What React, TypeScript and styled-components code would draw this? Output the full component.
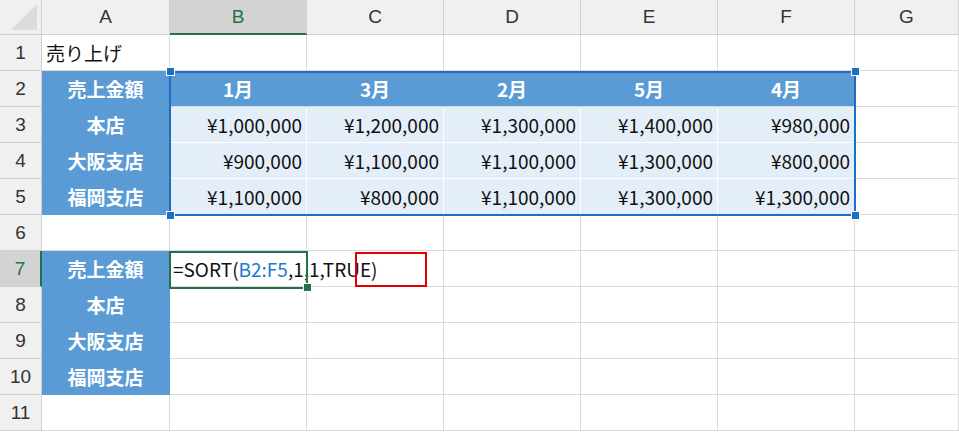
import React from "react";
import styled, { createGlobalStyle } from "styled-components";

const Global = createGlobalStyle`
  body { margin: 0; background: #fff; font-family: "Noto Sans CJK JP", "Noto Sans", sans-serif; }
`;

const COLS = [42, 128, 137, 137, 137, 137, 137, 104];
const ROWH = 36;

const Wrap = styled.div`
  position: relative;
  width: 959px;
  height: 432px;
  overflow: hidden;
`;

const Grid = styled.div`
  display: grid;
  grid-template-columns: ${COLS.map((c) => c + "px").join(" ")};
  grid-template-rows: 35px repeat(11, ${ROWH}px);
`;

const ColHead = styled.div<{ $active?: boolean }>`
  background: ${(p) => (p.$active ? "#d3d3d3" : "#f0f0f0")};
  border-right: 1px solid #d0d0d0;
  border-bottom: ${(p) => (p.$active ? "2px solid #217346" : "1px solid #d0d0d0")};
  color: ${(p) => (p.$active ? "#217346" : "#333")};
  display: flex;
  align-items: center;
  justify-content: center;
  font-family: "Liberation Sans", sans-serif;
  font-size: 19px;
  box-sizing: border-box;
`;

const Corner = styled.div`
  background: #f0f0f0;
  border-right: 1px solid #d0d0d0;
  border-bottom: 1px solid #d0d0d0;
  position: relative;
  box-sizing: border-box;
  &::after {
    content: "";
    position: absolute;
    right: 4px;
    bottom: 4px;
    border-left: 26px solid transparent;
    border-bottom: 26px solid #dcdcdc;
  }
`;

const RowHead = styled.div<{ $active?: boolean }>`
  background: ${(p) => (p.$active ? "#d3d3d3" : "#f0f0f0")};
  border-bottom: 1px solid #d0d0d0;
  border-right: ${(p) => (p.$active ? "2px solid #217346" : "1px solid #d0d0d0")};
  color: ${(p) => (p.$active ? "#217346" : "#333")};
  display: flex;
  align-items: center;
  justify-content: center;
  font-family: "Liberation Sans", sans-serif;
  font-size: 19px;
  box-sizing: border-box;
`;

type Kind = "plain" | "label" | "head" | "data";

const Cell = styled.div<{ $kind: Kind; $align: "left" | "center" | "right" }>`
  box-sizing: border-box;
  border-right: 1px solid ${(p) => (p.$kind === "label" || p.$kind === "head" ? "transparent" : "#dadada")};
  border-bottom: 1px solid ${(p) => (p.$kind === "label" ? "transparent" : "#dadada")};
  background: ${(p) =>
    p.$kind === "label" || p.$kind === "head" ? "#5b9bd5" : p.$kind === "data" ? "#e4eef8" : "#fff"};
  color: ${(p) => (p.$kind === "label" || p.$kind === "head" ? "#fff" : "#111")};
  font-weight: ${(p) => (p.$kind === "label" || p.$kind === "head" ? 700 : 400)};
  font-size: 19px;
  display: flex;
  align-items: center;
  justify-content: ${(p) => (p.$align === "left" ? "flex-start" : p.$align === "center" ? "center" : "flex-end")};
  padding: 0 4px;
  white-space: nowrap;
  overflow: visible;
  ${(p) => (p.$kind === "data" ? "border-color: #ffffff;" : "")}
`;

const Formula = styled.span`
  position: relative;
  z-index: 3;
  margin-left: -1px;
`;
const Ref = styled.span`
  color: #1f7ad1;
`;

const Box = styled.div<{ $color: string; $w: number }>`
  position: absolute;
  border: ${(p) => p.$w}px solid ${(p) => p.$color};
  box-sizing: border-box;
  pointer-events: none;
  z-index: 4;
`;
const Handle = styled.div<{ $color: string }>`
  position: absolute;
  width: 7px;
  height: 7px;
  background: ${(p) => p.$color};
  border: 1px solid #fff;
  z-index: 5;
`;

const colX = (i: number) => COLS.slice(0, i).reduce((a, b) => a + b, 0);
const rowY = (r: number) => 35 + (r - 1) * ROWH;

const headers = ["A", "B", "C", "D", "E", "F", "G"];
const data: string[][] = [
  ["1月", "3月", "2月", "5月", "4月"],
  ["¥1,000,000", "¥1,200,000", "¥1,300,000", "¥1,400,000", "¥980,000"],
  ["¥900,000", "¥1,100,000", "¥1,100,000", "¥1,300,000", "¥800,000"],
  ["¥1,100,000", "¥800,000", "¥1,100,000", "¥1,300,000", "¥1,300,000"],
];
const labels = ["売上金額", "本店", "大阪支店", "福岡支店"];

export default function App() {
  const cells: React.ReactNode[] = [];
  cells.push(<Corner key="c" />);
  headers.forEach((h, i) => cells.push(<ColHead key={h} $active={h === "B"}>{h}</ColHead>));
  for (let r = 1; r <= 11; r++) {
    cells.push(<RowHead key={"r" + r} $active={r === 7}>{r}</RowHead>);
    for (let c = 0; c < 7; c++) {
      let kind: Kind = "plain";
      let align: "left" | "center" | "right" = "left";
      let content: React.ReactNode = "";
      if (r === 1 && c === 0) content = "売り上げ";
      if (c === 0 && r >= 2 && r <= 5) { kind = "label"; align = "center"; content = labels[r - 2]; }
      if (c === 0 && r >= 7 && r <= 10) { kind = "label"; align = "center"; content = labels[r - 7]; }
      if (r === 2 && c >= 1 && c <= 5) { kind = "head"; align = "center"; content = data[0][c - 1]; }
      if (r >= 3 && r <= 5 && c >= 1 && c <= 5) { kind = "data"; align = "right"; content = data[r - 2][c - 1]; }
      if (r === 7 && c === 1)
        content = (
          <Formula>
            =SORT(<Ref>B2:F5</Ref>,1,1,TRUE)
          </Formula>
        );
      cells.push(
        <Cell key={r + "-" + c} $kind={kind} $align={align}>
          {content}
        </Cell>
      );
    }
  }
  const sx = colX(2), sy = rowY(2), ex = colX(7), ey = rowY(6);
  return (
    <>
      <Global />
      <Wrap>
        <Grid>{cells}</Grid>
        <Box $color="#1e6fc1" $w={2} style={{ left: sx - 1, top: sy, width: ex - sx + 2, height: ey - sy + 1 }} />
        <Handle $color="#1e6fc1" style={{ left: sx - 4, top: sy - 4 }} />
        <Handle $color="#1e6fc1" style={{ left: ex - 4, top: sy - 4 }} />
        <Handle $color="#1e6fc1" style={{ left: sx - 4, top: ey - 4 }} />
        <Handle $color="#1e6fc1" style={{ left: ex - 4, top: ey - 4 }} />
        <Box $color="#217346" $w={2} style={{ left: sx - 1, top: rowY(7), width: 139, height: 38 }} />
        <Handle $color="#217346" style={{ left: colX(3) - 4, top: rowY(8) - 4 }} />
        <Box $color="#e00000" $w={2} style={{ left: 355, top: 252, width: 72, height: 35 }} />
      </Wrap>
    </>
  );
}
